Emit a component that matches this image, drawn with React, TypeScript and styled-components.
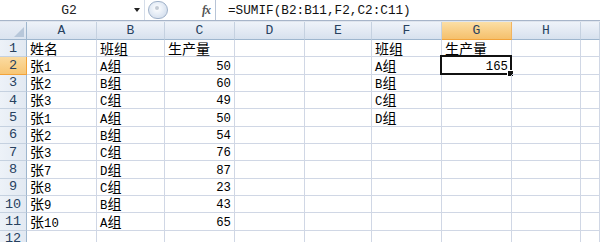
import { FC } from "react";
import styled, { createGlobalStyle, css } from "styled-components";

const GlobalStyle = createGlobalStyle`
  html, body {
    margin: 0;
    padding: 0;
    background: #ffffff;
    overflow: hidden;
  }
`;

const FONT = `"Liberation Mono", "Noto Sans CJK SC", monospace`;

const columns = ["A", "B", "C", "D", "E", "F", "G", "H"];
const colWidths = [70, 68, 70, 70, 67, 70, 70, 69];

type Row = (string | number | null)[];

const data: Row[] = [
  ["姓名", "班组", "生产量", null, null, "班组", "生产量", null],
  ["张1", "A组", 50, null, null, "A组", 165, null],
  ["张2", "B组", 60, null, null, "B组", null, null],
  ["张3", "C组", 49, null, null, "C组", null, null],
  ["张1", "A组", 50, null, null, "D组", null, null],
  ["张2", "B组", 54, null, null, null, null, null],
  ["张3", "C组", 76, null, null, null, null, null],
  ["张7", "D组", 87, null, null, null, null, null],
  ["张8", "C组", 23, null, null, null, null, null],
  ["张9", "B组", 43, null, null, null, null, null],
  ["张10", "A组", 65, null, null, null, null, null],
  [null, null, null, null, null, null, null, null],
];

// split mixed text so the CJK glyphs get their own (larger) size
const MixedText: FC<{ value: string | number }> = ({ value }) => {
  const parts = String(value).match(/[\u4e00-\u9fff]+|[^\u4e00-\u9fff]+/g) || [];
  return (
    <CellText>
      {parts.map((p, i) =>
        /[\u4e00-\u9fff]/.test(p) ? <Han key={i}>{p}</Han> : <Latin key={i}>{p}</Latin>
      )}
    </CellText>
  );
};

export default function App() {
  return (
    <Container>
      <GlobalStyle />
      <FormulaBar>
        <NameBox>
          <span>G2</span>
          <DropArrow />
        </NameBox>
        <FxButton>
          <FxKnob />
          <FxLabel>fx</FxLabel>
        </FxButton>
        <FormulaText>=SUMIF(B2:B11,F2,C2:C11)</FormulaText>
      </FormulaBar>
      <Gap />
      <Sheet>
        <Corner>
          <CornerTriangle />
        </Corner>
        {columns.map((c) => (
          <ColHeader key={c} $active={c === "G"}>
            {c}
          </ColHeader>
        ))}
        <ColHeader />
        {data.map((row, r) => (
          <SheetRow key={r} row={row} index={r + 1} />
        ))}
      </Sheet>
    </Container>
  );
}

const SheetRow: FC<{ row: Row; index: number }> = ({ row, index }) => (
  <>
    <RowHeader $active={index === 2}>{index}</RowHeader>
    {row.map((v, i) => {
      const selected = index === 2 && i === 6;
      return (
        <Cell key={i} $num={typeof v === "number"}>
          {v !== null && <MixedText value={v} />}
          {selected && (
            <Selection>
              <FillHandle />
            </Selection>
          )}
        </Cell>
      );
    })}
    <Cell />
  </>
);

const Container = styled.div`
  width: 600px;
  height: 242px;
  overflow: hidden;
  font-family: ${FONT};
  background: #fff;
`;

const FormulaBar = styled.div`
  display: flex;
  align-items: center;
  height: 20px;
  background: #ffffff;
  border-bottom: 1px solid #a7b5c9;
`;

const NameBox = styled.div`
  position: relative;
  width: 145px;
  height: 20px;
  display: flex;
  align-items: center;
  justify-content: center;
  font-size: 13px;
  color: #222;
  box-sizing: border-box;
  padding-right: 6px;
  border-right: 1px solid #d5dde9;
`;

const DropArrow = styled.span`
  position: absolute;
  right: 4px;
  top: 8px;
  width: 0;
  height: 0;
  border-left: 3.5px solid transparent;
  border-right: 3.5px solid transparent;
  border-top: 4px solid #222;
`;

const FxButton = styled.div`
  position: relative;
  width: 68px;
  height: 20px;
  margin-left: 3px;
  display: flex;
  align-items: center;
  justify-content: flex-end;
  box-sizing: border-box;
  border-right: 1px solid #b8c4d6;
`;

const FxKnob = styled.span`
  position: absolute;
  left: 0;
  top: 1px;
  width: 20px;
  height: 18px;
  border-radius: 10px;
  border: 1px solid #9fb1c9;
  box-sizing: border-box;
  background: radial-gradient(circle at 45% 40%, #ffffff 0%, #e6edf6 45%, #c9d5e6 100%);
  &::after {
    content: "";
    position: absolute;
    left: 6px;
    top: 4px;
    width: 4px;
    height: 4px;
    border-radius: 50%;
    background: #c3cad4;
  }
`;

const FxLabel = styled.span`
  font-family: "Liberation Serif", serif;
  font-style: italic;
  font-weight: bold;
  font-size: 12px;
  color: #555;
  margin-right: 5px;
  letter-spacing: -1px;
`;

const FormulaText = styled.div`
  padding-left: 12px;
  font-size: 12.7px;
  color: #111;
`;

const Gap = styled.div`
  height: 1px;
  background: #dfe5ee;
`;

const Sheet = styled.div`
  display: grid;
  grid-template-columns: 27px ${colWidths.map((w) => `${w}px`).join(" ")} 19px;
  grid-template-rows: 18px repeat(12, 17.35px);
  width: 600px;
`;

const headerBase = css`
  box-sizing: border-box;
  display: flex;
  align-items: center;
  justify-content: center;
  font-size: 13px;
  color: #27415f;
  border-right: 1px solid #9eb6ce;
  border-bottom: 1px solid #9eb6ce;
`;

const Corner = styled.div`
  ${headerBase};
  position: relative;
  background: linear-gradient(#e9eef6, #dbe4f0);
`;

const CornerTriangle = styled.span`
  position: absolute;
  right: 2px;
  bottom: 2px;
  width: 0;
  height: 0;
  border-left: 10px solid transparent;
  border-bottom: 10px solid #b7c7da;
`;

const ColHeader = styled.div<{ $active?: boolean }>`
  ${headerBase};
  border-right-color: ${(p) => (p.$active ? "#f2b45f" : "#c5d1e0")};
  border-bottom-color: ${(p) => (p.$active ? "#f2a33a" : "#9eb6ce")};
  background: ${(p) =>
    p.$active
      ? "linear-gradient(#fbdfa6, #f8cd84 55%, #f5c06c)"
      : "linear-gradient(#eef3f9, #e2e9f3 55%, #d7e1ee)"};
`;

const RowHeader = styled.div<{ $active?: boolean }>`
  ${headerBase};
  font-size: 13.5px;
  border-bottom-color: ${(p) => (p.$active ? "#f2a33a" : "#c5d1e0")};
  border-right-color: ${(p) => (p.$active ? "#f2a33a" : "#9eb6ce")};
  background: ${(p) =>
    p.$active ? "linear-gradient(#fbdba0, #f7c676)" : "linear-gradient(90deg, #edf2f8, #e2e9f2)"};
`;

const Cell = styled.div<{ $num?: boolean }>`
  position: relative;
  box-sizing: border-box;
  border-right: 1px solid #d0d7e5;
  border-bottom: 1px solid #d0d7e5;
  display: flex;
  align-items: center;
  justify-content: ${(p) => (p.$num ? "flex-end" : "flex-start")};
  padding: 0 3px;
  color: #000;
  white-space: nowrap;
  overflow: visible;
`;

const CellText = styled.span`
  display: inline-block;
  line-height: 16px;
  padding-top: 1px;
`;

const Han = styled.span`
  font-family: "Noto Sans CJK SC", sans-serif;
  font-size: 14px;
  vertical-align: baseline;
`;

const Latin = styled.span`
  font-family: "Liberation Mono", monospace;
  font-size: 12.3px;
  vertical-align: baseline;
`;

const Selection = styled.span`
  position: absolute;
  left: -2px;
  top: -2px;
  right: -1px;
  bottom: -1px;
  border: 2px solid #111;
  pointer-events: none;
`;

const FillHandle = styled.span`
  position: absolute;
  right: -4px;
  bottom: -4px;
  width: 5px;
  height: 5px;
  background: #111;
  border: 1px solid #fff;
`;
